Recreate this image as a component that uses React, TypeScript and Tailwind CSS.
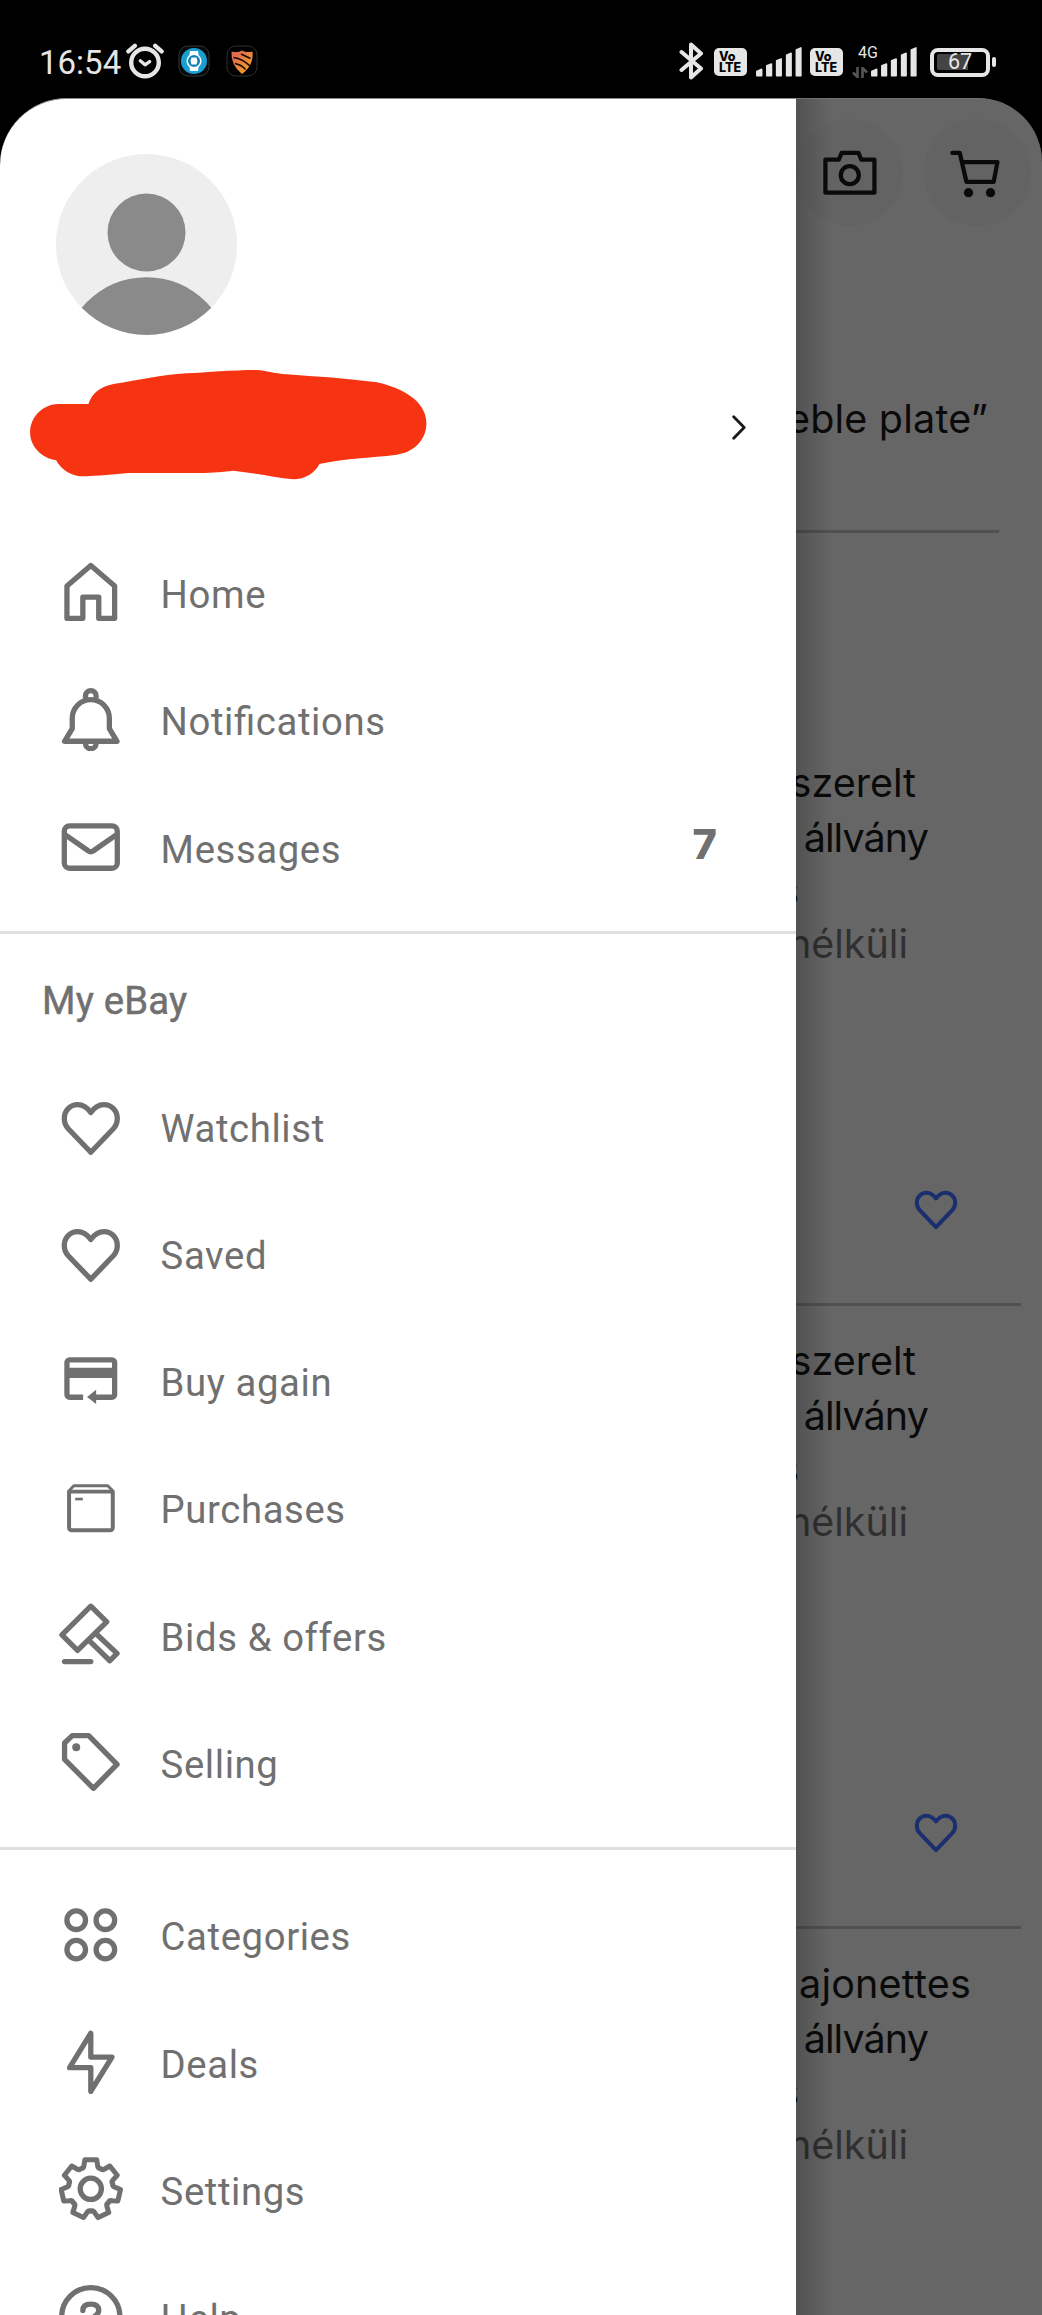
import type { ReactNode } from "react";

function Icon({ children, stroke = 2 }: { children: ReactNode; stroke?: number }) {
  return (
    <svg
      viewBox="0 0 24 24"
      className="h-[63.6px] w-[63.6px] shrink-0"
      fill="none"
      stroke="currentColor"
      strokeWidth={stroke}
      strokeLinecap="round"
      strokeLinejoin="round"
    >
      {children}
    </svg>
  );
}

const HEART =
  "M12 22 3.5 13.1C2.5 12 2 10.7 2 9.2 2 6.3 4.2 4 7 4c2 0 3.6 1 5 3 1.4-2 3-3 5-3 2.8 0 5 2.3 5 5.2 0 1.5-.5 2.8-1.5 3.9Z";

// seven teeth, each one a flat top with a rounded valley up to the next
function gearPath() {
  const at = (deg: number, r: number) => {
    const a = ((deg - 90) * Math.PI) / 180;
    return `${(12 + r * Math.cos(a)).toFixed(2)} ${(12 + r * Math.sin(a)).toFixed(2)}`;
  };
  const step = 360 / 7;
  const parts: string[] = [];
  for (let i = 0; i < 7; i++) {
    const c = i * step;
    parts.push(`${i === 0 ? "M" : "L"}${at(c - 11.5, 11.2)}`);
    parts.push(`L${at(c + 11.5, 11.2)}`);
    parts.push(`L${at(c + 16, 9.3)}`);
    parts.push(`Q${at(c + 19, 8.1)} ${at(c + step / 2, 8.5)}`);
    parts.push(`Q${at(c + step - 19, 8.1)} ${at(c + step - 16, 9.3)}`);
  }
  return parts.join("") + "Z";
}

const icons = {
  home: (
    <Icon>
      <path d="M12 2.1 21 9.8V22H15V14H9V22H3V9.8Z" />
    </Icon>
  ),
  bell: (
    <Icon>
      <path d="M2.1 20.1H21.9L19 15.3V11.4a7 7 0 0 0-14 0V15.3Z" />
      <path d="M10 4V3a2 2 0 0 1 4 0V4M10 20.9a2 2 0 0 0 4 0" strokeLinecap="butt" />
    </Icon>
  ),
  mail: (
    <Icon>
      <rect x="2" y="4.1" width="20" height="16" rx="2" />
      <path d="M2.4 7.5 11 13.5q1 .8 2 0L21.6 7.5" />
    </Icon>
  ),
  heart: (
    <Icon>
      <path d={HEART} />
    </Icon>
  ),
  buyAgain: (
    <Icon>
      <path d="M9.1 18.2H4a1 1 0 0 1-1-1V5.1a1 1 0 0 1 1-1H20a1 1 0 0 1 1 1V17.2a1 1 0 0 1-1 1H13" strokeLinecap="butt" />
      <path d="M3 9H21" strokeWidth="3.8" strokeLinecap="butt" />
      <path d="M10.6 18.1 14 15.4V20.8Z" fill="currentColor" stroke="none" />
    </Icon>
  ),
  box: (
    <Icon stroke={1.5}>
      <path d="M3.8 5.9H20.3V19.5a1 1 0 0 1-1 1H4.8a1 1 0 0 1-1-1Z" />
      <path d="M3.8 5.6 5.6 3.7H18.4L20.3 5.6" strokeWidth="1.1" />
      <path d="M6.1 8.7H9" strokeWidth="1" strokeLinecap="butt" />
    </Icon>
  ),
  gavel: (
    <Icon>
      <path d="M12 1.2 18 7.1 7 17.9 1.1 12Z" />
      <path d="M14.2 11.8 21.9 19 19.2 21.8 11.6 14.4" />
      <path d="M2.1 22.1H12" />
    </Icon>
  ),
  tag: (
    <Icon>
      <path d="M5 2.1H11.2L21.9 13 13 22 2.1 11.1V4.9Z" />
      <circle cx="6.5" cy="6.5" r="1.5" fill="currentColor" stroke="none" />
    </Icon>
  ),
  grid: (
    <Icon>
      <circle cx="6.5" cy="6.5" r="3.5" />
      <circle cx="17.5" cy="6.5" r="3.5" />
      <circle cx="6.5" cy="17.6" r="3.5" />
      <circle cx="17.5" cy="17.6" r="3.5" />
    </Icon>
  ),
  bolt: (
    <Icon>
      <path d="M12 1.2V10.2H20L12 23.2V14.2H4Z" />
    </Icon>
  ),
  gear: (
    <Icon>
      <path d={gearPath()} strokeWidth="1.9" />
      <circle cx="12" cy="12" r="4" />
    </Icon>
  ),
  help: (
    <Icon>
      <circle cx="12" cy="12" r="11" />
      <path d="M9 9.6C9 8.1 10 7.2 12 7.2s3 .9 3 2.4c0 2-3 2.5-3 4.5" />
    </Icon>
  ),
};

type Item = { label: string; icon: keyof typeof icons; count?: number };

const MAIN: Item[] = [
  { label: "Home", icon: "home" },
  { label: "Notifications", icon: "bell" },
  { label: "Messages", icon: "mail", count: 7 },
];

const MY_EBAY: Item[] = [
  { label: "Watchlist", icon: "heart" },
  { label: "Saved", icon: "heart" },
  { label: "Buy again", icon: "buyAgain" },
  { label: "Purchases", icon: "box" },
  { label: "Bids & offers", icon: "gavel" },
  { label: "Selling", icon: "tag" },
];

const MORE: Item[] = [
  { label: "Categories", icon: "grid" },
  { label: "Deals", icon: "bolt" },
  { label: "Settings", icon: "gear" },
  { label: "Help", icon: "help" },
];

function NavRow({ label, icon, count }: Item) {
  return (
    <li className="flex h-[127.33px] items-center pr-[79px] pl-[59px]">
      {icons[icon]}
      <span className="flex-1 pt-[6px] pl-[38px] text-[38.3px] leading-none tracking-[0.6px] whitespace-nowrap [font-feature-settings:'liga']">
        {label}
      </span>
      {count !== undefined && (
        <span className="pb-[5px] font-['Inter'] text-[41.5px] leading-none font-extrabold">{count}</span>
      )}
    </li>
  );
}

function NavList({ items }: { items: Item[] }) {
  return (
    <ul className="shrink-0">
      {items.map((item) => (
        <NavRow key={item.label} {...item} />
      ))}
    </ul>
  );
}

function Divider() {
  return <div className="my-[21px] h-[3px] shrink-0 bg-[#e0e0e0]" />;
}

function Volte() {
  return (
    <div className="flex h-7 w-[33px] flex-col justify-center rounded-[5px] bg-[#e6e6e6] pl-[5px] font-['Inter'] text-[12.5px] leading-[11.5px] font-extrabold text-black">
      <span>Vo</span>
      <span>LTE</span>
    </div>
  );
}

function Signal() {
  return (
    <svg viewBox="0 0 46 30" className="h-[30px] w-[46px]" fill="#e6e6e6" stroke="#e6e6e6" strokeWidth="1.5" strokeLinejoin="round">
      <path d="M.8 24.5 5.7 22.3V28.8H.8ZM10.8 18.8 15.5 17V28.8H10.8ZM20.6 13.7 25.2 12V28.8H20.6ZM30.6 8.3 35.1 6.3V28.8H30.6ZM40.3 3 44.9.9V28.8H40.3Z" />
    </svg>
  );
}

function StatusBar() {
  return (
    <header className="flex h-[98px] shrink-0 items-center pt-[26px] pr-[46px] pl-[39px] text-[#e6e6e6]">
      <span className="pt-px text-[33px] leading-none">16:54</span>
      <svg viewBox="0 0 38 36" className="mb-[2px] ml-[5px] h-9 w-[38px]" fill="none" stroke="#e6e6e6" strokeWidth="4.4" strokeLinecap="round" strokeLinejoin="round">
        <circle cx="19" cy="19.5" r="13.8" />
        <path d="M2.4 8.3 8.8 2.8M29.2 2.8 35.6 8.3" />
        <path d="M14.3 17.8 19 21.8 23.6 18.6" strokeWidth="3.4" />
      </svg>
      <svg viewBox="0 0 32 32" className="mb-[2px] ml-[14px] h-8 w-8">
        <rect x="1" y="1" width="30" height="30" rx="9" fill="#07090b" stroke="#30363a" />
        <circle cx="16" cy="16" r="13" fill="#1b9fd2" />
        <path d="M12 6H20L20.6 10.5H11.4ZM11.4 21.5H20.6L20 26H12Z" fill="#fff" />
        <circle cx="16" cy="16" r="6.8" fill="#1380ad" stroke="#fff" strokeWidth="1.5" />
        <path d="M13.5 12.5H18.5L19.5 16 18.5 19.5H13.5L12.5 16Z" fill="#fff" />
      </svg>
      <svg viewBox="0 0 32 32" className="mb-[2px] ml-4 h-8 w-8">
        <defs>
          <linearGradient id="shield" x1="0" y1="0" x2="1" y2="1">
            <stop offset=".2" stopColor="#e06a52" />
            <stop offset=".9" stopColor="#f9a51a" />
          </linearGradient>
        </defs>
        <rect x="1" y="1" width="30" height="30" rx="9" fill="#000" stroke="#30302e" />
        <path d="M5.5 6.5Q12 8 16 5.5 20 8 26.5 6.5Q28 20 16 29 4.5 20 5.5 6.5Z" fill="url(#shield)" />
        <path d="M7.500 12.500Q17 14 24 21M9 18.500Q16 20 19.500 24.500M15 9 24.500 13.500" fill="none" stroke="#120a06" strokeWidth="1.700" />
      </svg>

      <svg viewBox="0 0 25 38" className="mb-[2px] ml-auto h-[38px] w-[25px]" fill="none" stroke="#e6e6e6" strokeWidth="4" strokeLinejoin="round" strokeLinecap="round">
        <path d="M2.5 10 22 26.5 12 35.5V2.5L22 11.5 2.5 28" />
      </svg>
      <div className="ml-[10px]">
        <Volte />
      </div>
      <div className="ml-[9px]">
        <Signal />
      </div>
      <div className="ml-[8px]">
        <Volte />
      </div>
      <div className="ml-[9px] flex h-[34px] w-[18px] flex-col justify-between pb-px">
        <span className="ml-[6px] text-[16px] leading-[15px]">4G</span>
        <svg viewBox="0 0 16 11" className="h-[11px] w-4" fill="none" stroke="#555" strokeWidth="2.6">
          <path d="M5.5 0V10L1 5.5M10.5 11V1L15 5.5" />
        </svg>
      </div>
      <div className="ml-px">
        <Signal />
      </div>
      <div className="ml-[13px] flex h-[29px] w-[60px] items-center justify-center rounded-[8px] border-4 border-[#e6e6e6] p-[3px]">
        <div className="flex h-4 w-full items-center justify-center rounded-[2px] bg-[linear-gradient(90deg,#444_68%,#000_68%)] text-[21.5px] leading-none">
          67
        </div>
      </div>
      <div className="ml-[2px] h-[10px] w-1 rounded-sm bg-[#e6e6e6]" />
    </header>
  );
}

function Avatar() {
  return (
    <svg viewBox="0 0 181 181" className="mt-[55px] ml-[56px] h-[181px] w-[181px] shrink-0">
      <clipPath id="avatar">
        <circle cx="90.5" cy="90.5" r="90.5" />
      </clipPath>
      <g clipPath="url(#avatar)">
        <rect width="181" height="181" fill="#eee" />
        <circle cx="90.5" cy="78.5" r="39" fill="#8a8a8a" />
        <circle cx="90.5" cy="207.5" r="84.3" fill="#8a8a8a" />
      </g>
    </svg>
  );
}

function Drawer() {
  return (
    <nav className="flex w-[796px] shrink-0 flex-col overflow-hidden rounded-tl-[67px] border-t border-[#8c8c8c] bg-white text-[#707070]">
      <Avatar />
      <div className="mt-[35px] flex h-[158.5px] shrink-0 items-start justify-between pr-[50px] pl-[30px]">
        <svg viewBox="90 720 1189 330" className="h-[110px] w-[396.5px]">
          <path
            fill="#f63411"
            d="M175 822H265C275 790 300 770 340 762C420 750 480 735 560 730C620 727 700 720 770 720C800 722 820 730 860 733C950 740 1040 745 1130 757C1200 772 1279 810 1279 880C1279 930 1240 968 1190 974C1110 984 1030 985 958 1002C945 1028 915 1048 880 1048C820 1042 760 1028 700 1022C670 1025 640 1029 600 1029H385C340 1032 300 1038 240 1039C205 1035 182 1015 168 991C125 985 90 950 90 907C90 860 130 822 175 822Z"
          />
        </svg>
        <svg viewBox="0 0 14 25" className="mt-[45px] h-[25px] w-[14px]" fill="none" stroke="#191919" strokeWidth="2.8" strokeLinecap="round" strokeLinejoin="round">
          <path d="M1.7 1.7 12.2 12.5 1.7 23.3" />
        </svg>
      </div>
      <NavList items={MAIN} />
      <Divider />
      <h2 className="-mt-[21px] flex h-[127.5px] shrink-0 items-center pt-[6px] pl-[42px] text-[38.3px] leading-none font-normal tracking-[0.2px] [-webkit-text-stroke:0.5px]">
        My eBay
      </h2>
      <NavList items={MY_EBAY} />
      <Divider />
      <NavList items={MORE} />
    </nav>
  );
}

function Title({ children }: { children: string }) {
  return children === "ajonettes" ? (
    <p className="pr-[71px] tracking-[0.2px]">{children}</p>
  ) : (
    <p className="pr-[126px]">{children}</p>
  );
}

function Result({ title }: { title: string }) {
  return (
    <article className="flex shrink-0 flex-col items-end text-[39.5px] leading-[55px] whitespace-nowrap">
      <Title>{title}</Title>
      <p className="pr-[114px] tracking-[-0.9px]">állvány</p>
      <p className="pr-[243px] leading-[51px]">s</p>
      <p className="pr-[134px] text-[#303030]">nélküli</p>
    </article>
  );
}

function SaveHeart() {
  return (
    <div className="flex shrink-0 justify-end pr-[83px]">
      <svg viewBox="0 0 24 24" className="h-[46px] w-[46px]" fill="none" stroke="#1b2e6e" strokeWidth="2.1" strokeLinejoin="round">
        <path d={HEART} />
      </svg>
    </div>
  );
}

function Background() {
  return (
    <main className="relative flex flex-1 flex-col overflow-hidden rounded-tr-[64px] border-t border-[#707070] bg-[#666] font-['Inter'] text-[#0a0a0a]">
      <div className="flex shrink-0 gap-[21px] pt-[20px]">
        <span className="flex h-[107px] w-[107px] shrink-0 items-center justify-center rounded-full bg-[#636363]">
          <Icon stroke={1.6}>
            <path d="M2.8 7H7.9L8.9 4.5H15.3L16.3 7H21.3V19.5H2.8Z" />
            <circle cx="12" cy="12.9" r="3.4" />
          </Icon>
        </span>
        <span className="flex h-[107px] w-[107px] shrink-0 items-center justify-center rounded-full bg-[#636363]">
          <Icon stroke={1.6}>
            <path d="M2.4 4.5H5.2L7.7 15.4H18L19.4 8H6.1" />
            <circle cx="8.5" cy="19.5" r="1.75" fill="currentColor" stroke="none" />
            <circle cx="16.8" cy="19.5" r="1.75" fill="currentColor" stroke="none" />
          </Icon>
        </span>
      </div>
      <p className="mt-[166px] flex shrink-0 justify-end pr-[54px] text-[39.5px] leading-[55px] tracking-[0.2px] whitespace-nowrap">
        eble plate”
      </p>
      <div className="mt-[83px] mr-[43px] h-[3px] shrink-0 bg-[#515151]" />
      <div className="mt-[223px] flex shrink-0 flex-col">
        <Result title="szerelt" />
        <div className="mt-[213px] flex flex-col gap-[72px]">
          <SaveHeart />
          <div className="mr-[21px] h-[3px] bg-[#515151]" />
        </div>
      </div>
      <div className="mt-[28px] flex shrink-0 flex-col">
        <Result title="szerelt" />
        <div className="mt-[258px] flex flex-col gap-[72px]">
          <SaveHeart />
          <div className="mr-[21px] h-[3px] bg-[#515151]" />
        </div>
      </div>
      <div className="mt-[28px] shrink-0">
        <Result title="ajonettes" />
      </div>
      {/* shadow the open drawer casts on the page */}
      <div className="absolute inset-y-0 left-0 w-9 bg-linear-to-r from-black/20 to-transparent" />
    </main>
  );
}

export default function App() {
  return (
    <div className="flex h-[2315px] w-[1042px] flex-col overflow-hidden bg-black font-['Roboto',sans-serif]">
      <StatusBar />
      <div className="flex min-h-0 flex-1">
        <Drawer />
        <Background />
      </div>
    </div>
  );
}
